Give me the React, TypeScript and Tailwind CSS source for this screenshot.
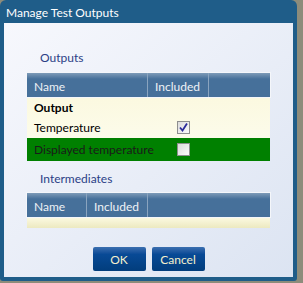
import React from 'react';

const font = { fontFamily: 'Lato, "Noto Sans", sans-serif' };

const Check = ({ checked }: { checked?: boolean }) => (
  <span className="w-[13px] h-[13px] border border-[#8e8f8f] bg-gradient-to-br from-[#dcdcdc] to-[#fbfbfb] flex items-center justify-center">
    {checked && (
      <svg width="9" height="9" viewBox="0 0 9 9">
        <path d="M1 4.5 L3.5 7.5 L8 0.5" stroke="#2b2b9a" strokeWidth="1.8" fill="none" />
      </svg>
    )}
  </span>
);

const Header = ({ cols }: { cols: { label: string; w: string }[] }) => (
  <div className="h-[26px] border border-[#f4f6fa] bg-gradient-to-b from-[#7e9bb8] via-[#46709a] via-[25%] to-[#46709a] flex text-[12px] text-[#eef2f6]">
    {cols.map((c) => (
      <div key={c.label} className={`${c.w} h-full border-r border-[#8aa4bf] flex items-center pl-[7px] pt-[3px]`}>
        {c.label}
      </div>
    ))}
  </div>
);

export default function App() {
  return (
    <div className="w-[303px] h-[283px] bg-[#8d8c7b] flex" style={font}>
      <div className="w-[297px] h-[281px] bg-[#1f5d89] rounded-t-[6px] rounded-b-[3px] flex flex-col px-[4px] pb-[4px]">
        <div className="h-[23px] text-white text-[12px] leading-[14px] pl-[2px] pt-[6px]">Manage Test Outputs</div>
        <div className="flex-1 bg-gradient-to-br from-[#f7f8fd] to-[#dce4f2] flex flex-col px-[22px]">
          <div className="pt-[26px] pl-[14px] h-[49px] text-[12px] text-[#2b3f86]">Outputs</div>
          <Header cols={[{ label: 'Name', w: 'w-[121px]' }, { label: 'Included', w: 'w-[61px]' }]} />
          <div className="text-[12px] text-black bg-gradient-to-b from-[#fbf9e0] to-[#fdfdf0] mx-[1px]">
            <div className="h-[19px] font-bold pl-[7px] leading-[19px]">Output</div>
            <div className="h-[21px] flex items-center">
              <span className="w-[150px] pl-[7px]">Temperature</span>
              <Check checked />
            </div>
            <div className="h-[23px] flex items-center bg-[#008000] text-[#1a1a1a]">
              <span className="w-[150px] pl-[7px]">Displayed temperature</span>
              <Check />
            </div>
          </div>
          <div className="pt-[9px] pl-[14px] h-[31px] text-[12px] text-[#2b3f86]">Intermediates</div>
          <Header cols={[{ label: 'Name', w: 'w-[60px]' }, { label: 'Included', w: 'w-[61px]' }]} />
          <div className="h-[10px] mx-[1px] bg-gradient-to-b from-[#fbf9e0] to-[#ece9c0]" />
          <div className="flex justify-center gap-[6px] mt-[19px]">
            {['OK', 'Cancel'].map((t) => (
              <button
                key={t}
                className="w-[53px] h-[24px] rounded-[2px] bg-gradient-to-b from-[#3a6fb0] via-[#084a96] via-[30%] to-[#023d7c] text-[12px] text-[#f4f0cc] pt-[1px]"
              >
                {t}
              </button>
            ))}
          </div>
        </div>
      </div>
    </div>
  );
}
